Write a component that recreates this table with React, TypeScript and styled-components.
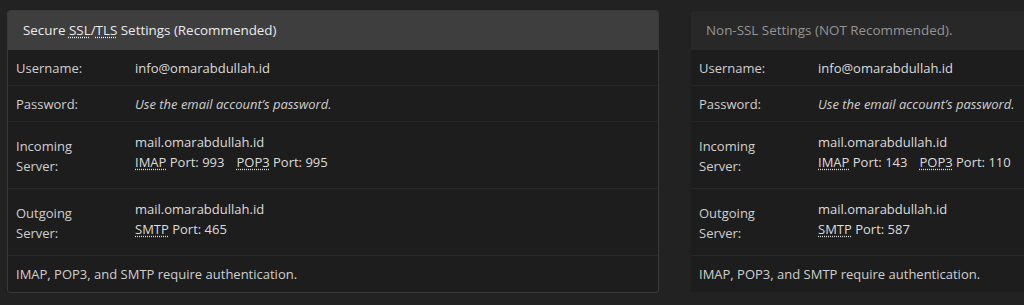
import React from "react";
import styled, { createGlobalStyle } from "styled-components";

const GlobalStyle = createGlobalStyle`
  html, body {
    margin: 0;
    padding: 0;
    background: #222222;
    overflow: hidden;
  }
  body {
    font-family: "Open Sans", "Liberation Sans", sans-serif;
    font-size: 13px;
    color: #d4d4d4;
  }
`;

const Page = styled.div`
  display: flex;
  gap: 31px;
  padding: 10px 0 0 7px;
  width: 1400px;
`;

const Panel = styled.section<{ $muted?: boolean }>`
  flex: 0 0 652px;
  box-sizing: border-box;
  background: #1d1d1d;
  border: 1px solid ${(p) => (p.$muted ? "#212121" : "#3a3a3a")};
  border-radius: 3px;
  overflow: hidden;
`;

const PanelHeader = styled.div<{ $muted?: boolean }>`
  height: 39px;
  line-height: 39px;
  padding: 0 15px;
  background: ${(p) => (p.$muted ? "#282828" : "#3e3e3e")};
  color: ${(p) => (p.$muted ? "#959595" : "#ececec")};
  font-size: 13.4px;
  white-space: nowrap;
`;

const Row = styled.div`
  display: grid;
  grid-template-columns: 119px 1fr;
  align-items: center;
  padding: 8px 8px 7px;
  border-bottom: 1px solid #272727;
  line-height: 20px;
`;

const Label = styled.div`
  color: #cfcfcf;
`;

const Value = styled.div<{ $tall?: boolean }>`
  color: #dcdcdc;
  padding: ${(p) => (p.$tall ? "2px 0 9px" : "0")};
`;

const Hint = styled.span`
  font-style: italic;
  color: #cfcfcf;
`;

const Abbr = styled.abbr`
  text-decoration: underline dotted;
  text-underline-offset: 2px;
  cursor: help;
`;

const Port = styled.span`
  & + & {
    margin-left: 12px;
  }
`;

const Note = styled.div`
  padding: 8px 8px;
  line-height: 20px;
  color: #cfcfcf;
`;

type Settings = {
  title: React.ReactNode;
  muted?: boolean;
  imap: number;
  pop3: number;
  smtp: number;
};

const panels: Settings[] = [
  {
    title: (
      <>
        Secure <Abbr title="Secure Sockets Layer">SSL</Abbr>/
        <Abbr title="Transport Layer Security">TLS</Abbr> Settings (Recommended)
      </>
    ),
    imap: 993,
    pop3: 995,
    smtp: 465,
  },
  {
    title: "Non-SSL Settings (NOT Recommended).",
    muted: true,
    imap: 143,
    pop3: 110,
    smtp: 587,
  },
];

const SettingsPanel: React.FC<{ s: Settings }> = ({ s }) => (
  <Panel $muted={s.muted}>
    <PanelHeader $muted={s.muted}>{s.title}</PanelHeader>
    <Row>
      <Label>Username:</Label>
      <Value>info@omarabdullah.id</Value>
    </Row>
    <Row>
      <Label>Password:</Label>
      <Value>
        <Hint>Use the email account’s password.</Hint>
      </Value>
    </Row>
    <Row>
      <Label>
        Incoming
        <br />
        Server:
      </Label>
      <Value $tall>
        mail.omarabdullah.id
        <br />
        <Port>
          <Abbr title="Internet Message Access Protocol">IMAP</Abbr> Port: {s.imap}
        </Port>
        <Port>
          <Abbr title="Post Office Protocol 3">POP3</Abbr> Port: {s.pop3}
        </Port>
      </Value>
    </Row>
    <Row>
      <Label>
        Outgoing
        <br />
        Server:
      </Label>
      <Value $tall>
        mail.omarabdullah.id
        <br />
        <Abbr title="Simple Mail Transfer Protocol">SMTP</Abbr> Port: {s.smtp}
      </Value>
    </Row>
    <Note>IMAP, POP3, and SMTP require authentication.</Note>
  </Panel>
);

const App: React.FC = () => (
  <>
    <GlobalStyle />
    <Page>
      {panels.map((s, i) => (
        <SettingsPanel key={i} s={s} />
      ))}
    </Page>
  </>
);

export default App;
